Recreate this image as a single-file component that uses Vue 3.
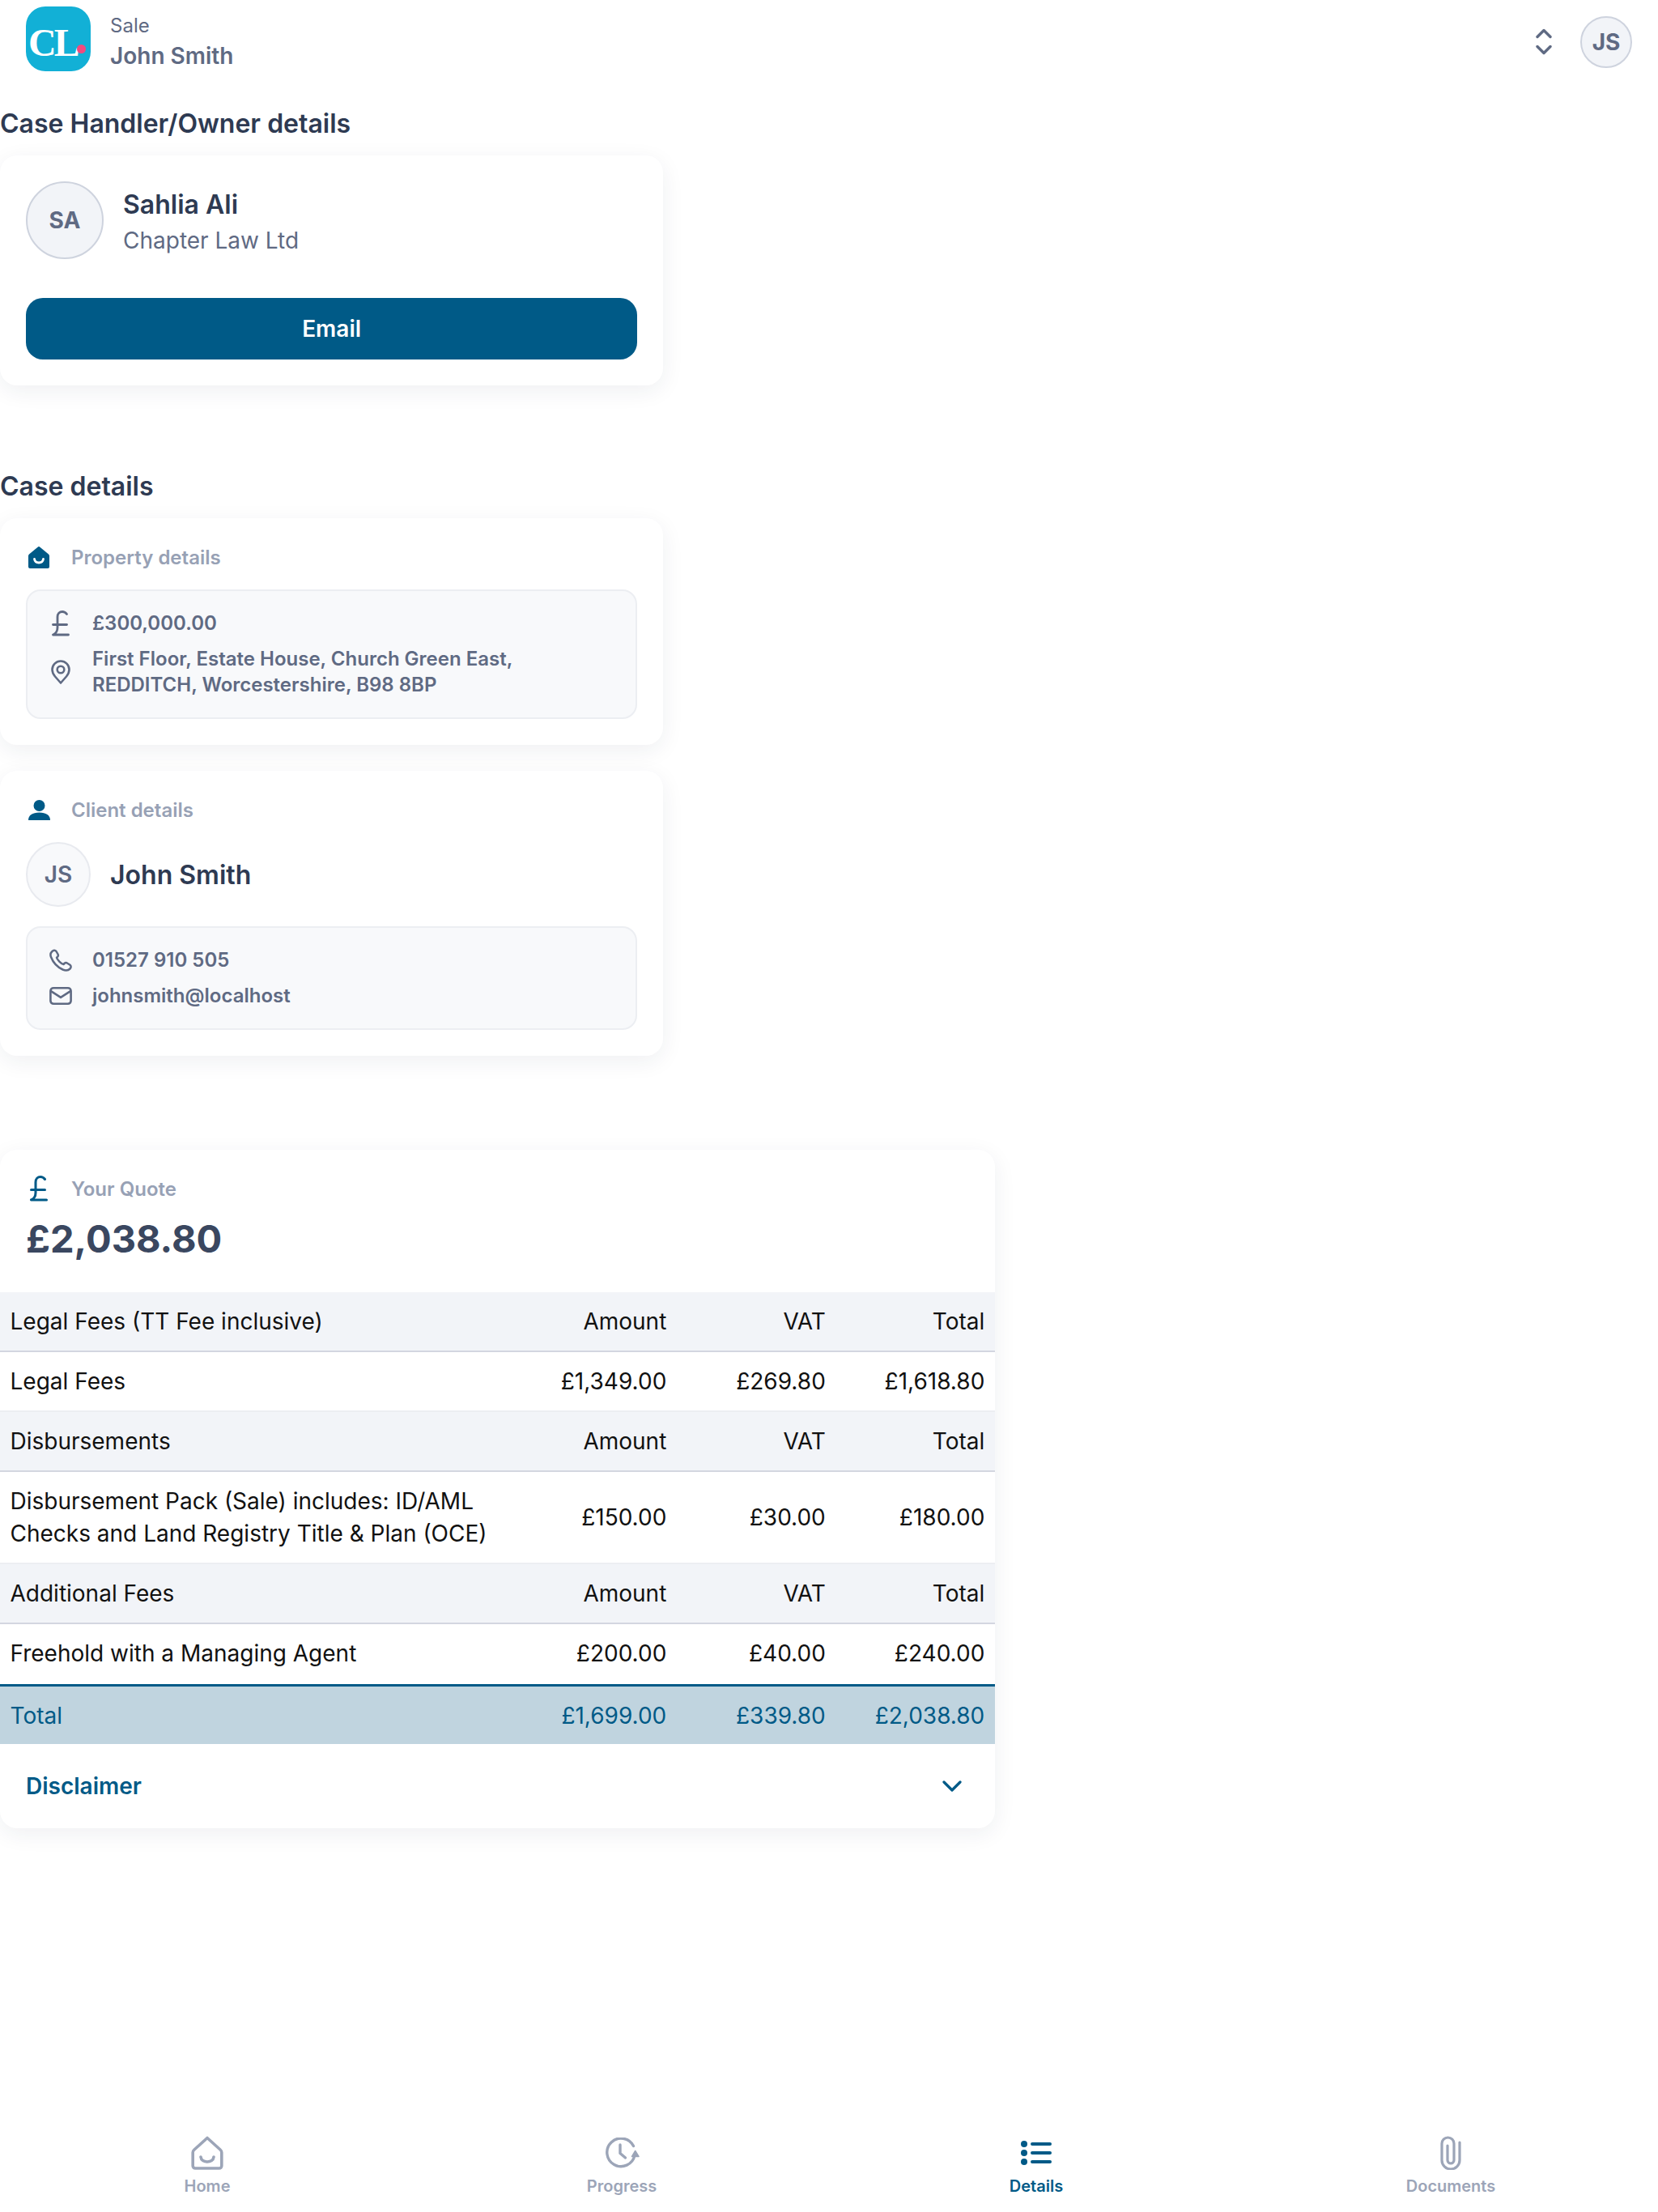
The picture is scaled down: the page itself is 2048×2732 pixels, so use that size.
<template>
  <div class="page">
    <header class="top-bar">
      <div class="brand">
        <div class="logo">
          <span class="logo-text">CL</span>
          <span class="logo-dot"></span>
        </div>
        <div class="brand-text">
          <span class="brand-type">Sale</span>
          <span class="brand-name">John Smith</span>
        </div>
      </div>
      <div class="top-actions">
        <svg class="switch-icon" viewBox="0 0 20 33" fill="none" stroke="currentColor" stroke-width="3.4" stroke-linecap="round" stroke-linejoin="round">
          <path d="M2 10.5 10 2.5l8 8" />
          <path d="M2 22.5l8 8 8-8" />
        </svg>
        <div class="avatar avatar-top">JS</div>
      </div>
    </header>

    <main class="content">
      <section class="owner-section">
        <h2 class="section-title">Case Handler/Owner details</h2>
        <div class="card owner-card">
          <div class="owner-row">
            <div class="avatar avatar-owner">SA</div>
            <div class="owner-text">
              <span class="owner-name">Sahlia Ali</span>
              <span class="owner-company">Chapter Law Ltd</span>
            </div>
          </div>
          <button class="email-btn">Email</button>
        </div>
      </section>

      <section class="case-section">
        <h2 class="section-title">Case details</h2>
        <div class="card">
          <div class="card-head">
            <span class="head-icon">
              <svg width="26" height="27" viewBox="0 0 26 27">
                <path fill="#005a87" d="M11.600.7a2 2 0 0 1 2.800 0l10.300 8.600c.8.7 1.300 1.500 1.300 2.500V25a2 2 0 0 1-2 2H2a2 2 0 0 1-2-2V11.800c0-1 .5-1.800 1.300-2.500z" />
                <path fill="none" stroke="#fff" stroke-width="2.800" stroke-linecap="round" d="M7.500 15.500c1 6 10 6 11 0" />
              </svg>
            </span>
            <span class="head-label">Property details</span>
          </div>
          <div class="info-box">
            <div class="info-row">
              <span class="info-icon">
                <svg width="22" height="32" viewBox="0 0 22 32" fill="none" stroke="currentColor" stroke-width="2.800" stroke-linecap="round" stroke-linejoin="round">
                  <path d="M18.500 4.500C17 2.500 15 1.500 13 1.500 9.500 1.500 7 4 7 8v13c0 4-2 7.500-5.500 9h19" />
                  <path d="M1.500 17.500h17" />
                </svg>
              </span>
              <span>£300,000.00</span>
            </div>
            <div class="info-row">
              <span class="info-icon">
                <svg width="24" height="30" viewBox="0 0 24 30" fill="none" stroke="currentColor" stroke-width="2.600" stroke-linejoin="round">
                  <path d="M12 28.500 5 20.500C3 18 1.500 15.500 1.500 12a10.500 10.500 0 0 1 21 0c0 3.500-1.500 6-3.500 8.500z" />
                  <circle cx="12" cy="12" r="4.300" />
                </svg>
              </span>
              <span>First Floor, Estate House, Church Green East,<br />REDDITCH, Worcestershire, B98 8BP</span>
            </div>
          </div>
        </div>

        <div class="card client-card">
          <div class="card-head">
            <span class="head-icon">
              <svg width="27" height="25" viewBox="0 0 27 25" fill="#005a87">
                <circle cx="13.500" cy="7" r="7" />
                <path d="M0 25c0-6 5-9.500 13.500-9.500S27 19 27 25z" />
              </svg>
            </span>
            <span class="head-label">Client details</span>
          </div>
          <div class="client-row">
            <div class="avatar avatar-client">JS</div>
            <span class="client-name">John Smith</span>
          </div>
          <div class="info-box">
            <div class="info-row">
              <span class="info-icon">
                <svg width="28" height="28" viewBox="0 0 28 28" fill="none" stroke="currentColor" stroke-width="2.500" stroke-linejoin="round">
                  <path d="M3 3.500C4.500 1.500 7 1 8.500 3l2 3.500C11.300 8 11 9 9.800 10l-.8.8c.5 2.200 5.500 7.700 8.500 8.200l1-1c1-1 2.500-1.200 3.800-.3l3.200 2.100c1.500 1.200 1.500 3.200 0 4.700-2 2-5.500 2.500-9 1C10 22.500 4.500 16.500 2 10 1 7.500 1.500 5 3 3.500z" />
                </svg>
              </span>
              <span>01527 910 505</span>
            </div>
            <div class="info-row">
              <span class="info-icon">
                <svg width="30" height="24" viewBox="0 0 30 24" fill="none" stroke="currentColor" stroke-width="2.800" stroke-linecap="round" stroke-linejoin="round">
                  <rect x="1.500" y="1.500" width="27" height="21" rx="4" />
                  <path d="M2.500 6 15 14l12.500-8" />
                </svg>
              </span>
              <span>johnsmith@localhost</span>
            </div>
          </div>
        </div>
      </section>

      <section class="card quote-card">
        <div class="quote-top">
          <div class="card-head">
            <span class="head-icon">
              <svg width="22" height="32" viewBox="0 0 22 32" fill="none" stroke="#005a87" stroke-width="3" stroke-linecap="round" stroke-linejoin="round">
                <path d="M18.500 4.500C17 2.500 15 1.500 13 1.500 9.500 1.500 7 4 7 8v13c0 4-2 7.500-5.500 9h19" />
                <path d="M1.500 17.500h17" />
              </svg>
            </span>
            <span class="head-label">Your Quote</span>
          </div>
          <div class="quote-amount">£2,038.80</div>
        </div>

        <table class="quote-table">
          <colgroup>
            <col class="col-name" />
            <col class="col-num" />
            <col class="col-num" />
            <col class="col-num" />
          </colgroup>
          <tbody v-for="group in feeGroups" :key="group.title">
            <tr class="group-row">
              <td>{{ group.title }}</td>
              <td>Amount</td>
              <td>VAT</td>
              <td>Total</td>
            </tr>
            <tr class="fee-row">
              <td>
                <template v-for="(line, i) in group.name" :key="line"><br v-if="i" />{{ line }}</template>
              </td>
              <td>{{ group.amount }}</td>
              <td>{{ group.vat }}</td>
              <td>{{ group.total }}</td>
            </tr>
          </tbody>
          <tfoot>
            <tr class="total-row">
              <td>Total</td>
              <td>£1,699.00</td>
              <td>£339.80</td>
              <td>£2,038.80</td>
            </tr>
          </tfoot>
        </table>

        <div class="disclaimer">
          <span>Disclaimer</span>
          <svg width="24" height="14" viewBox="0 0 24 14" fill="none" stroke="#005a87" stroke-width="3.200" stroke-linecap="round" stroke-linejoin="round">
            <path d="M2 2l10 10L22 2" />
          </svg>
        </div>
      </section>
    </main>

    <nav class="bottom-nav">
      <a v-for="tab in tabs" :key="tab.label" class="nav-item" :class="{ active: tab.active }">
        <span class="nav-icon">
          <svg v-if="tab.label === 'Home'" width="40" height="42" viewBox="0 0 40 42" fill="none" stroke="currentColor" stroke-width="3.600" stroke-linecap="round" stroke-linejoin="round">
            <path d="M20 2.500 36 17c1 .9 1.800 2 1.800 3.400V37a3 3 0 0 1-3 3H5.200a3 3 0 0 1-3-3V20.400C2.200 19 3 17.900 4 17z" />
            <path d="M12 26c.8 8 15.200 8 16 0" />
          </svg>
          <svg v-else-if="tab.label === 'Progress'" width="43" height="38" viewBox="0 0 43 38" fill="none" stroke="currentColor" stroke-width="3.400" stroke-linecap="round" stroke-linejoin="round">
            <path d="M35.500 10.500A17.300 17.300 0 1 0 37 22" />
            <path d="M19 9v10.500l6.500 5.500" />
            <path d="M37.700 16.500 33.500 23.500h8.500z" fill="currentColor" stroke-width="1.500" />
          </svg>
          <svg v-else-if="tab.label === 'Details'" width="38" height="32" viewBox="0 0 38 32" fill="none" stroke="currentColor" stroke-width="4" stroke-linecap="round">
            <circle cx="4" cy="5" r="4" fill="currentColor" stroke="none" />
            <circle cx="4" cy="16" r="4" fill="currentColor" stroke="none" />
            <circle cx="4" cy="27" r="4" fill="currentColor" stroke="none" />
            <path d="M14 5h22M14 16h22M14 27h22" />
          </svg>
          <svg v-else width="26" height="42" viewBox="0 0 26 42" fill="none" stroke="currentColor" stroke-width="3.200" stroke-linecap="round" stroke-linejoin="round">
            <path d="M24 8v22a11 11 0 0 1-22 0V9.500a7.500 7.500 0 0 1 15 0V30a4 4 0 0 1-8 0V12" />
          </svg>
        </span>
        <span class="nav-label">{{ tab.label }}</span>
      </a>
    </nav>
  </div>
</template>

<script setup>
const feeGroups = [
  { title: 'Legal Fees (TT Fee inclusive)', name: ['Legal Fees'], amount: '£1,349.00', vat: '£269.80', total: '£1,618.80' },
  {
    title: 'Disbursements',
    name: ['Disbursement Pack (Sale) includes: ID/AML', 'Checks and Land Registry Title & Plan (OCE)'],
    amount: '£150.00',
    vat: '£30.00',
    total: '£180.00'
  },
  { title: 'Additional Fees', name: ['Freehold with a Managing Agent'], amount: '£200.00', vat: '£40.00', total: '£240.00' }
]

const tabs = [
  { label: 'Home' },
  { label: 'Progress' },
  { label: 'Details', active: true },
  { label: 'Documents' }
]
</script>

<style>
body {
  background: #fff;
}
</style>

<style scoped>
.page {
  min-height: 2732px;
  display: flex;
  flex-direction: column;
  background: #fff;
  font-family: Inter, "Liberation Sans", sans-serif;
  color: #5f6a83;
}

.top-bar {
  display: flex;
  justify-content: space-between;
  padding: 8px 32px 0;
  height: 96px;
  box-sizing: border-box;
}

.brand {
  display: flex;
  gap: 24px;
  height: 80px;
}

.logo {
  position: relative;
  width: 80px;
  height: 80px;
  border-radius: 24px;
  background: #12b0d6;
  display: flex;
  align-items: center;
  padding: 10px 0 0 3px;
  box-sizing: border-box;
}

.logo-text {
  font-family: "Liberation Serif", serif;
  font-weight: 700;
  font-size: 48px;
  letter-spacing: -3px;
  line-height: 1;
  color: #fff;
}

.logo-dot {
  position: absolute;
  right: 6px;
  bottom: 22px;
  width: 11px;
  height: 11px;
  border-radius: 50%;
  background: #f4497e;
}

.brand-text {
  display: flex;
  flex-direction: column;
  gap: 3px;
  padding-top: 8px;
}

.brand-type {
  font-size: 24px;
  line-height: 32px;
}

.brand-name {
  font-size: 28px;
  font-weight: 600;
  line-height: 36px;
}

.top-actions {
  display: flex;
  align-items: center;
  gap: 35px;
  height: 63px;
  margin-top: 12px;
}

.switch-icon {
  width: 20px;
  height: 33px;
  color: #5f6a83;
}

.avatar {
  display: flex;
  align-items: center;
  justify-content: center;
  border-radius: 50%;
  box-sizing: border-box;
  flex-shrink: 0;
  background: #f2f4f8;
  border: 2px solid #ced3de;
  font-weight: 700;
}

.avatar-top {
  width: 64px;
  height: 64px;
  font-size: 28px;
}

.avatar-owner {
  width: 96px;
  height: 96px;
  font-size: 28px;
}

.avatar-client {
  width: 80px;
  height: 80px;
  font-size: 28px;
  font-weight: 600;
  background: #f8f9fb;
  border-color: #e8eaef;
}

.content {
  display: flex;
  flex-direction: column;
  padding-top: 32px;
}

.section-title {
  margin: 0 0 15px;
  font-size: 32px;
  font-weight: 600;
  line-height: 49px;
  color: #2e3a52;
}

.card {
  background: #fff;
  border-radius: 21px;
  padding: 32px;
  box-shadow: 0 7px 28px rgba(30, 40, 70, 0.07);
}

.owner-section,
.case-section {
  width: 40%;
}

.owner-row {
  display: flex;
  align-items: center;
  gap: 24px;
}

.owner-text {
  display: flex;
  flex-direction: column;
  gap: 4px;
  padding-top: 5px;
}

.owner-name {
  font-size: 32px;
  font-weight: 600;
  line-height: 40px;
  color: #2e3a52;
}

.owner-company {
  font-size: 28px;
  line-height: 40px;
}

.email-btn {
  display: block;
  width: 100%;
  height: 76px;
  margin-top: 48px;
  border: none;
  border-radius: 21px;
  background: #005a87;
  color: #fff;
  font-family: inherit;
  font-size: 28px;
  font-weight: 600;
}

.case-section {
  margin-top: 100px;
}

.client-card {
  margin-top: 32px;
}

.card-head {
  display: flex;
  align-items: center;
  gap: 24px;
  height: 32px;
}

.head-icon {
  display: flex;
  justify-content: center;
  width: 32px;
}

.head-label {
  font-size: 24px;
  font-weight: 600;
  color: #97a1b5;
}

.info-box {
  margin-top: 24px;
  padding: 24px 27px;
  display: flex;
  flex-direction: column;
  gap: 12px;
  background: #f8f9fb;
  border: 2px solid #eceef2;
  border-radius: 18px;
  font-size: 24px;
  font-weight: 600;
  line-height: 32px;
}

.info-row {
  display: flex;
  align-items: center;
  gap: 25px;
}

.info-icon {
  display: flex;
  justify-content: center;
  width: 28px;
  height: 32px;
  align-items: center;
}

.client-row {
  display: flex;
  align-items: center;
  gap: 24px;
  margin-top: 24px;
}

.client-name {
  font-size: 32px;
  font-weight: 600;
  color: #2e3a52;
}

.quote-card {
  width: 60%;
  margin-top: 116px;
  padding: 0;
}

.quote-top {
  padding: 32px 32px 38px;
}

.quote-amount {
  margin-top: 18px;
  font-size: 47px;
  font-weight: 700;
  line-height: 56px;
  color: #3a4760;
}

.quote-table {
  width: 100%;
  table-layout: fixed;
  border-collapse: separate;
  border-spacing: 0;
  font-size: 28px;
  line-height: 40px;
  color: #111;
}

.col-num {
  width: 196.500px;
}

.quote-table td {
  padding: 16px 12.500px;
  text-align: right;
  white-space: nowrap;
}

.quote-table td:first-child {
  text-align: left;
}

.group-row td {
  background: #f2f4f8;
  border-bottom: 2px solid #d3d6e0;
}

.fee-row td {
  border-bottom: 2px solid #eceef2;
}

tbody:last-of-type .fee-row td {
  border-bottom-color: #fff;
}

.total-row td {
  background: #c0d4df;
  border-top: 3px solid #005a87;
  color: #005a87;
  padding-bottom: 15px;
}

.disclaimer {
  display: flex;
  align-items: center;
  justify-content: space-between;
  padding: 32px 41px 32px 32px;
  font-size: 28px;
  font-weight: 600;
  line-height: 40px;
  color: #005a87;
}

.bottom-nav {
  display: grid;
  grid-template-columns: repeat(4, 1fr);
  margin-top: auto;
  height: 112px;
  box-sizing: border-box;
  padding-top: 18px;
  background: #fff;
}

.nav-item {
  display: flex;
  flex-direction: column;
  align-items: center;
  color: #9ca5b8;
  text-decoration: none;
}

.nav-item.active {
  color: #005a87;
}

.nav-icon {
  display: flex;
  align-items: center;
  height: 42px;
  margin-bottom: 6px;
}

.nav-label {
  font-size: 20px;
  font-weight: 600;
  line-height: 28px;
}
</style>
